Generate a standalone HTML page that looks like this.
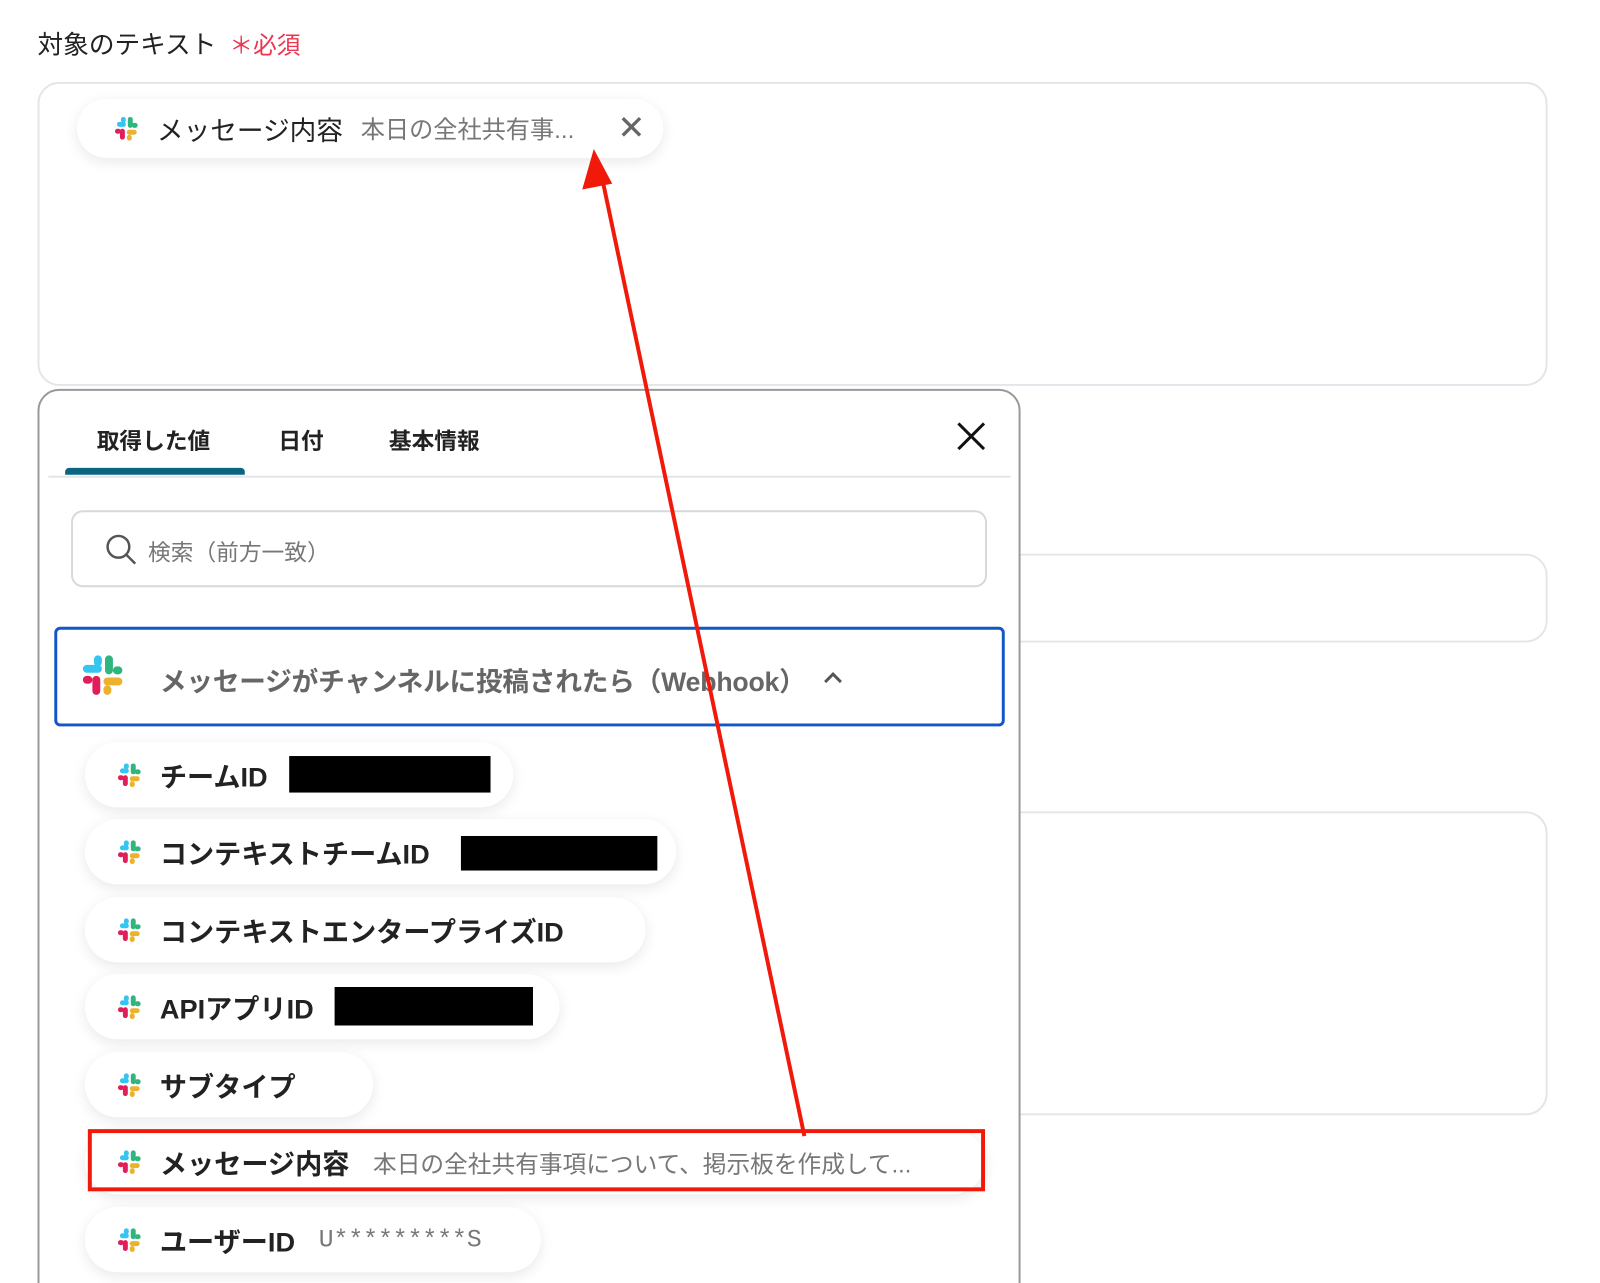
<!DOCTYPE html>
<html style="overflow:hidden;height:1283px"><head><meta charset="utf-8"><style>
*{box-sizing:border-box;margin:0;padding:0}
body{width:1600px;height:1283px;background:#fff;position:relative;overflow:hidden;font-family:"Liberation Sans","Noto Sans CJK JP",sans-serif;color:#222}
#w{position:absolute;left:0;top:0;width:1620px;height:1300px;overflow:hidden;transform:scale(0.987);transform-origin:0 0}
.a{position:absolute}
.box{position:absolute;border:2px solid #e3e5ea;border-radius:22px;background:#fff}
.chip{position:absolute;height:66px;border-radius:33px;background:#fff;box-shadow:0 4px 14px rgba(0,0,0,.09);display:flex;align-items:center;padding-left:30px;font-size:27.5px;font-weight:bold;white-space:nowrap}
.chip svg{margin-right:16px;flex:none}
.sub{font-weight:normal;color:#777;font-size:24px;margin-left:24px}
.blk{position:absolute;background:#000}
</style></head><body><div id="w">
<div class="a" style="left:38px;top:25px;font-size:26px">対象のテキスト <span style="color:#f0334f;font-size:24px;margin-left:6px">＊必須</span></div>
<div class="box" style="left:38px;top:83px;width:1530px;height:308px"></div>
<div class="box" style="left:1000px;top:561px;width:568px;height:90px"></div>
<div class="box" style="left:1000px;top:822px;width:568px;height:308px"></div>

<div class="chip" style="left:78px;top:100px;width:594px;height:60px;font-weight:normal;font-size:27px;padding-left:35px">
<svg width="30" height="30" viewBox="0 0 30 30"><g stroke-linecap="round" stroke-width="5"><path d="M8 11H12" stroke="#36c5f0"/><path d="M12 6V7" stroke="#36c5f0"/><path d="M19 6V12" stroke="#2eb67d"/><path d="M23 12H24" stroke="#2eb67d"/><path d="M11 18V24" stroke="#e01e5a"/><path d="M6 18H7" stroke="#e01e5a"/><path d="M18 19H23" stroke="#ecb22e"/><path d="M18 24V25" stroke="#ecb22e"/></g></svg>
メッセージ内容<span class="sub" style="font-size:24.5px;margin-left:18px">本日の全社共有事...</span>
<span style="position:absolute;right:18px;top:10px;font-size:34px;color:#666;font-weight:300">✕</span></div>

<div class="a" style="left:38px;top:394px;width:996px;height:960px;border:2px solid #999;border-radius:22px;background:#fff"></div>
<div class="a" style="left:98px;top:428px;font-size:23px;font-weight:bold">取得した値</div>
<div class="a" style="left:282px;top:428px;font-size:23px;font-weight:bold">日付</div>
<div class="a" style="left:394px;top:428px;font-size:23px;font-weight:bold">基本情報</div>
<div class="a" style="left:66px;top:474px;width:182px;height:7px;background:#0a6580;border-radius:4px 4px 0 0"></div>
<div class="a" style="left:49px;top:482px;width:975px;height:2px;background:#e3e5ea"></div>
<svg class="a" style="left:968px;top:426px" width="32" height="32" viewBox="0 0 32 32"><path d="M3 3L29 29M29 3L3 29" stroke="#111" stroke-width="3"/></svg>
<div class="a" style="left:72px;top:517px;width:928px;height:78px;border:2px solid #d6d8dc;border-radius:12px"></div>
<svg class="a" style="left:106px;top:540px" width="34" height="34" viewBox="0 0 34 34"><circle cx="14" cy="14" r="11" fill="none" stroke="#555" stroke-width="2.5"/><path d="M22 22L31 31" stroke="#555" stroke-width="2.5"/></svg>
<div class="a" style="left:150px;top:541px;font-size:23px;color:#777">検索（前方一致）</div>
<div class="a" style="left:55px;top:635px;width:963px;height:101px;border:3px solid #1556c7;border-radius:6px"></div>
<svg class="a" style="left:80px;top:660px" width="48" height="48" viewBox="0 0 30 30"><g stroke-linecap="round" stroke-width="5"><path d="M5 11H12" stroke="#36c5f0"/><path d="M12 5V7" stroke="#36c5f0"/><path d="M19 5V12" stroke="#2eb67d"/><path d="M24 12H25" stroke="#2eb67d"/><path d="M11 18V25" stroke="#e01e5a"/><path d="M5 18H6" stroke="#e01e5a"/><path d="M18 19H25" stroke="#ecb22e"/><path d="M18 24V25" stroke="#ecb22e"/></g></svg>
<div class="a" style="left:162px;top:669px;font-size:27px;font-weight:bold;color:#666;letter-spacing:-0.2px">メッセージがチャンネルに投稿されたら（Webhook）</div>
<svg class="a" style="left:833px;top:678px" width="22" height="16" viewBox="0 0 22 16"><path d="M3 13L11 5L19 13" stroke="#555" stroke-width="3" fill="none"/></svg>

<div class="chip" style="left:86px;top:752px;width:434px"><svg width="30" height="30" viewBox="0 0 30 30"><g stroke-linecap="round" stroke-width="5"><path d="M8 11H12" stroke="#36c5f0"/><path d="M12 6V7" stroke="#36c5f0"/><path d="M19 6V12" stroke="#2eb67d"/><path d="M23 12H24" stroke="#2eb67d"/><path d="M11 18V24" stroke="#e01e5a"/><path d="M6 18H7" stroke="#e01e5a"/><path d="M18 19H23" stroke="#ecb22e"/><path d="M18 24V25" stroke="#ecb22e"/></g></svg>チームID</div>
<div class="chip" style="left:86px;top:830px;width:599px"><svg width="30" height="30" viewBox="0 0 30 30"><g stroke-linecap="round" stroke-width="5"><path d="M8 11H12" stroke="#36c5f0"/><path d="M12 6V7" stroke="#36c5f0"/><path d="M19 6V12" stroke="#2eb67d"/><path d="M23 12H24" stroke="#2eb67d"/><path d="M11 18V24" stroke="#e01e5a"/><path d="M6 18H7" stroke="#e01e5a"/><path d="M18 19H23" stroke="#ecb22e"/><path d="M18 24V25" stroke="#ecb22e"/></g></svg>コンテキストチームID</div>
<div class="chip" style="left:86px;top:909px;width:568px"><svg width="30" height="30" viewBox="0 0 30 30"><g stroke-linecap="round" stroke-width="5"><path d="M8 11H12" stroke="#36c5f0"/><path d="M12 6V7" stroke="#36c5f0"/><path d="M19 6V12" stroke="#2eb67d"/><path d="M23 12H24" stroke="#2eb67d"/><path d="M11 18V24" stroke="#e01e5a"/><path d="M6 18H7" stroke="#e01e5a"/><path d="M18 19H23" stroke="#ecb22e"/><path d="M18 24V25" stroke="#ecb22e"/></g></svg>コンテキストエンタープライズID</div>
<div class="chip" style="left:86px;top:987px;width:481px"><svg width="30" height="30" viewBox="0 0 30 30"><g stroke-linecap="round" stroke-width="5"><path d="M8 11H12" stroke="#36c5f0"/><path d="M12 6V7" stroke="#36c5f0"/><path d="M19 6V12" stroke="#2eb67d"/><path d="M23 12H24" stroke="#2eb67d"/><path d="M11 18V24" stroke="#e01e5a"/><path d="M6 18H7" stroke="#e01e5a"/><path d="M18 19H23" stroke="#ecb22e"/><path d="M18 24V25" stroke="#ecb22e"/></g></svg>APIアプリID</div>
<div class="chip" style="left:86px;top:1066px;width:292px"><svg width="30" height="30" viewBox="0 0 30 30"><g stroke-linecap="round" stroke-width="5"><path d="M8 11H12" stroke="#36c5f0"/><path d="M12 6V7" stroke="#36c5f0"/><path d="M19 6V12" stroke="#2eb67d"/><path d="M23 12H24" stroke="#2eb67d"/><path d="M11 18V24" stroke="#e01e5a"/><path d="M6 18H7" stroke="#e01e5a"/><path d="M18 19H23" stroke="#ecb22e"/><path d="M18 24V25" stroke="#ecb22e"/></g></svg>サブタイプ</div>
<div class="chip" style="left:86px;top:1144px;width:912px"><svg width="30" height="30" viewBox="0 0 30 30"><g stroke-linecap="round" stroke-width="5"><path d="M8 11H12" stroke="#36c5f0"/><path d="M12 6V7" stroke="#36c5f0"/><path d="M19 6V12" stroke="#2eb67d"/><path d="M23 12H24" stroke="#2eb67d"/><path d="M11 18V24" stroke="#e01e5a"/><path d="M6 18H7" stroke="#e01e5a"/><path d="M18 19H23" stroke="#ecb22e"/><path d="M18 24V25" stroke="#ecb22e"/></g></svg>メッセージ内容<span class="sub">本日の全社共有事項について、掲示板を作成して...</span></div>
<div class="chip" style="left:86px;top:1223px;width:462px"><svg width="30" height="30" viewBox="0 0 30 30"><g stroke-linecap="round" stroke-width="5"><path d="M8 11H12" stroke="#36c5f0"/><path d="M12 6V7" stroke="#36c5f0"/><path d="M19 6V12" stroke="#2eb67d"/><path d="M23 12H24" stroke="#2eb67d"/><path d="M11 18V24" stroke="#e01e5a"/><path d="M6 18H7" stroke="#e01e5a"/><path d="M18 19H23" stroke="#ecb22e"/><path d="M18 24V25" stroke="#ecb22e"/></g></svg>ユーザーID<span class="sub" style="font-family:'Liberation Mono',monospace;font-size:25px">U*********S</span></div>
<div class="blk" style="left:293px;top:766px;width:204px;height:37px"></div>
<div class="blk" style="left:467px;top:847px;width:199px;height:35px"></div>
<div class="blk" style="left:339px;top:1000px;width:201px;height:39px"></div>
<div class="a" style="left:89px;top:1144px;width:909px;height:63px;border:4px solid #f0190a"></div>
<svg class="a" style="left:0;top:0" width="1600" height="1283"><path d="M815 1151L611 185" stroke="#f0190a" stroke-width="4"/><path d="M602 155L592 190L618 185Z" fill="#f0190a" stroke="#f0190a" stroke-width="3"/></svg>
</div></body></html>
